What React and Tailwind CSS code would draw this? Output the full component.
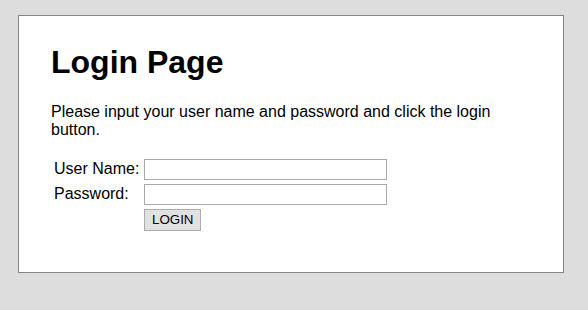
import React from 'react';

const fields = [
  { label: 'User Name:', type: 'text' },
  { label: 'Password:', type: 'password' },
];

export default function App() {
  return (
    <div className="min-h-[310px] w-full bg-[#dddddd] pt-[15px] pl-[18px] font-['Liberation_Sans',Arial,sans-serif] text-black">
      <div className="w-[546px] h-[258px] border border-[#848484] bg-white px-[32px] pt-[28px]">
        <h1 className="text-[32px] leading-[37px] font-bold">Login Page</h1>
        <p className="mt-[22px] text-[16px] leading-[18.4px]">
          Please input your user name and password and click the login button.
        </p>

        <div className="mt-[16px] flex flex-col gap-[2px] pt-[2px] pl-[3px]">
          {fields.map((field) => (
            <div key={field.label} className="flex items-center h-[23px]">
              <label className="w-[90px] text-[16px] leading-[18px]">{field.label}</label>
              <input
                type={field.type}
                className="w-[243px] h-[21px] border border-[#a9a9a9] bg-white px-[2px] text-[13px] outline-none"
              />
            </div>
          ))}
          <div className="flex items-center h-[23px] pl-[90px] pt-[1px]">
            <button
              type="button"
              className="h-[22px] px-[7px] border border-[#adadad] bg-[#e1e1e1] text-[13.33px] leading-[18px] text-black"
            >
              LOGIN
            </button>
          </div>
        </div>
      </div>
    </div>
  );
}
